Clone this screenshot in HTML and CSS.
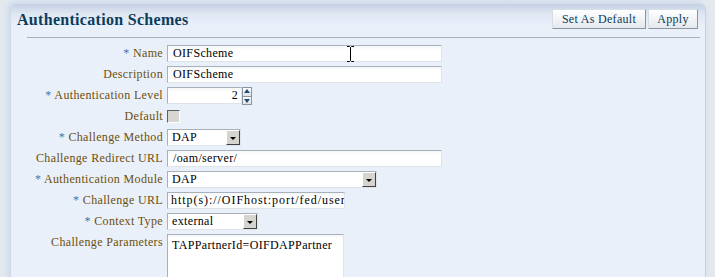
FILE: index.html
```html
<!DOCTYPE html>
<html>
<head>
	<title>Authentication Schemes</title>
	<meta charset="utf-8">
	<link rel="stylesheet" href="styles.css">
</head>
<body>
	<div class="panel">
		<div class="panel-header">
			<h1>Authentication Schemes</h1>
			<div class="actions">
				<button class="btn btn-default">Set As Default</button>
				<button class="btn btn-apply">Apply</button>
			</div>
		</div>
		<div class="separator"></div>

		<div class="form">
			<label class="req">Name</label>
			<div class="field">
				<div class="input w-full">OIFScheme
					<svg class="cursor" width="7" height="16" viewBox="0 0 7 16"><path d="M0 0.5h2.5l1 1 1-1h2.5M3.5 1.5v13M0 15.5h2.5l1-1 1 1h2.5" fill="none" stroke="#000" stroke-width="1"/></svg>
				</div>
			</div>

			<label>Description</label>
			<div class="field"><div class="input w-full">OIFScheme</div></div>

			<label class="req">Authentication Level</label>
			<div class="field">
				<div class="input w-level num">2</div>
				<div class="spinner">
					<span class="spin up"></span>
					<span class="spin down"></span>
				</div>
			</div>

			<label>Default</label>
			<div class="field"><div class="checkbox"></div></div>

			<label class="req">Challenge Method</label>
			<div class="field"><div class="select w-method"><span>DAP</span><span class="arrow"></span></div></div>

			<label>Challenge Redirect URL</label>
			<div class="field"><div class="input w-full">/oam/server/</div></div>

			<label class="req">Authentication Module</label>
			<div class="field"><div class="select w-module"><span>DAP</span><span class="arrow"></span></div></div>

			<label class="req">Challenge URL</label>
			<div class="field"><div class="input w-url clip">http(s)://OIFhost:port/fed/user</div></div>

			<label class="req">Context Type</label>
			<div class="field"><div class="select w-context"><span>external</span><span class="arrow"></span></div></div>

			<label class="top">Challenge Parameters</label>
			<div class="field area"><div class="textarea">TAPPartnerId=OIFDAPPartner</div></div>
		</div>
	</div>
</body>
</html>
```

FILE: styles.css
```css
body {
	margin: 0;
	background-color: #e4e9ee;
	font-family: "Liberation Serif", serif;
	font-size: 12px;
	letter-spacing: 0.35px;
	color: #000000;
	overflow: hidden;
}

.panel {
	margin: 4px 9px 0 10px;
	height: 290px;
	background: linear-gradient(to bottom, #c4d1e4 0px, #dfe7f3 10px, #eaf0fa 22px, #eaf0fa 100%);
	border-left: 1px solid #d0d8e4;
	border-right: 1px solid #c8d0da;
	border-radius: 6px 6px 0 0;
	box-shadow: -2px -2px 6px rgba(190, 210, 235, 0.7);
}

.panel-header {
	display: flex;
	justify-content: space-between;
	align-items: center;
	padding: 5px 7px 0 6px;
	height: 20px;
}

h1 {
	margin: 2px 0 0 0;
	font-size: 16px;
	font-weight: bold;
	color: #0c3c5c;
	letter-spacing: 0.3px;
}

.actions {
	display: flex;
	gap: 2px;
}

.btn {
	font-family: "Liberation Serif", serif;
	font-size: 12px;
	letter-spacing: 0.3px;
	color: #0c3c5c;
	height: 20px;
	padding: 0;
	background: linear-gradient(to bottom, #ffffff, #e4e8ee);
	border: 1px solid;
	border-color: #d8dee6 #8a95a2 #8a95a2 #d8dee6;
	border-radius: 1px;
}

.btn-default {
	width: 94px;
}

.btn-apply {
	width: 50px;
}

.separator {
	margin: 8px 5px 0 16px;
	border-top: 1px solid #a9b0ba;
}

.form {
	display: grid;
	grid-template-columns: 152px auto;
	column-gap: 4px;
	row-gap: 4px;
	margin-top: 7px;
	align-items: center;
}

.form label {
	text-align: right;
	color: #6b4f0a;
	white-space: nowrap;
}

.form label.req::before {
	content: "* ";
	color: #4a73a0;
}

.form label.top {
	align-self: start;
	padding-top: 1px;
}

.field {
	display: flex;
	align-items: center;
	height: 17px;
}

.field.area {
	height: auto;
}

.input {
	position: relative;
	height: 15px;
	line-height: 15px;
	padding: 0 5px;
	background: linear-gradient(to bottom, #f4f6f8, #ffffff 4px);
	border: 1px solid;
	border-color: #a8b0ba #dfe4ea #dfe4ea #a8b0ba;
	white-space: nowrap;
}

.w-full {
	width: 263px;
}

.w-level {
	width: 63px;
}

.w-url {
	width: 165px;
}

.num {
	text-align: right;
	padding-right: 3px;
	padding-left: 7px;
}

.clip {
	overflow: hidden;
	padding-left: 3px;
	padding-right: 8px;
	letter-spacing: 0.95px;
}

.cursor {
	position: absolute;
	left: 179px;
	top: 0;
}

.spinner {
	display: flex;
	flex-direction: column;
	width: 10px;
	height: 17px;
}

.spin {
	flex: 1;
	position: relative;
	background: linear-gradient(to bottom, #ffffff, #dde3ea);
	border: 1px solid #8a95a2;
	margin-bottom: -1px;
}

.spin.up::after, .spin.down::after {
	content: "";
	position: absolute;
	left: 1px;
	border-left: 3px solid transparent;
	border-right: 3px solid transparent;
}

.spin.up::after {
	top: 1px;
	border-bottom: 4px solid #1f4e70;
}

.spin.down::after {
	top: 2px;
	border-top: 4px solid #1f4e70;
}

.checkbox {
	width: 11px;
	height: 11px;
	background-color: #d8d6d0;
	border: 1px solid;
	border-color: #606060 #ffffff #ffffff #606060;
}

.select {
	display: flex;
	justify-content: space-between;
	align-items: center;
	height: 15px;
	padding-left: 4px;
	background-color: #ffffff;
	border: 1px solid;
	border-color: #a8b0ba #dfe4ea #dfe4ea #a8b0ba;
}

.w-method {
	width: 68px;
}

.w-module {
	width: 204px;
}

.w-context {
	width: 85px;
}

.arrow {
	position: relative;
	width: 12px;
	height: 13px;
	background-color: #d6d4ce;
	border: 1px solid;
	border-color: #ffffff #404040 #404040 #ffffff;
}

.arrow::after {
	content: "";
	position: absolute;
	left: 3px;
	top: 6px;
	border-left: 3px solid transparent;
	border-right: 3px solid transparent;
	border-top: 3px solid #000000;
}

.textarea {
	width: 167px;
	height: 60px;
	padding: 3px 4px;
	background: linear-gradient(to bottom, #f4f6f8, #ffffff 4px);
	border: 1px solid;
	border-color: #a8b0ba #dfe4ea #dfe4ea #a8b0ba;
}
```
